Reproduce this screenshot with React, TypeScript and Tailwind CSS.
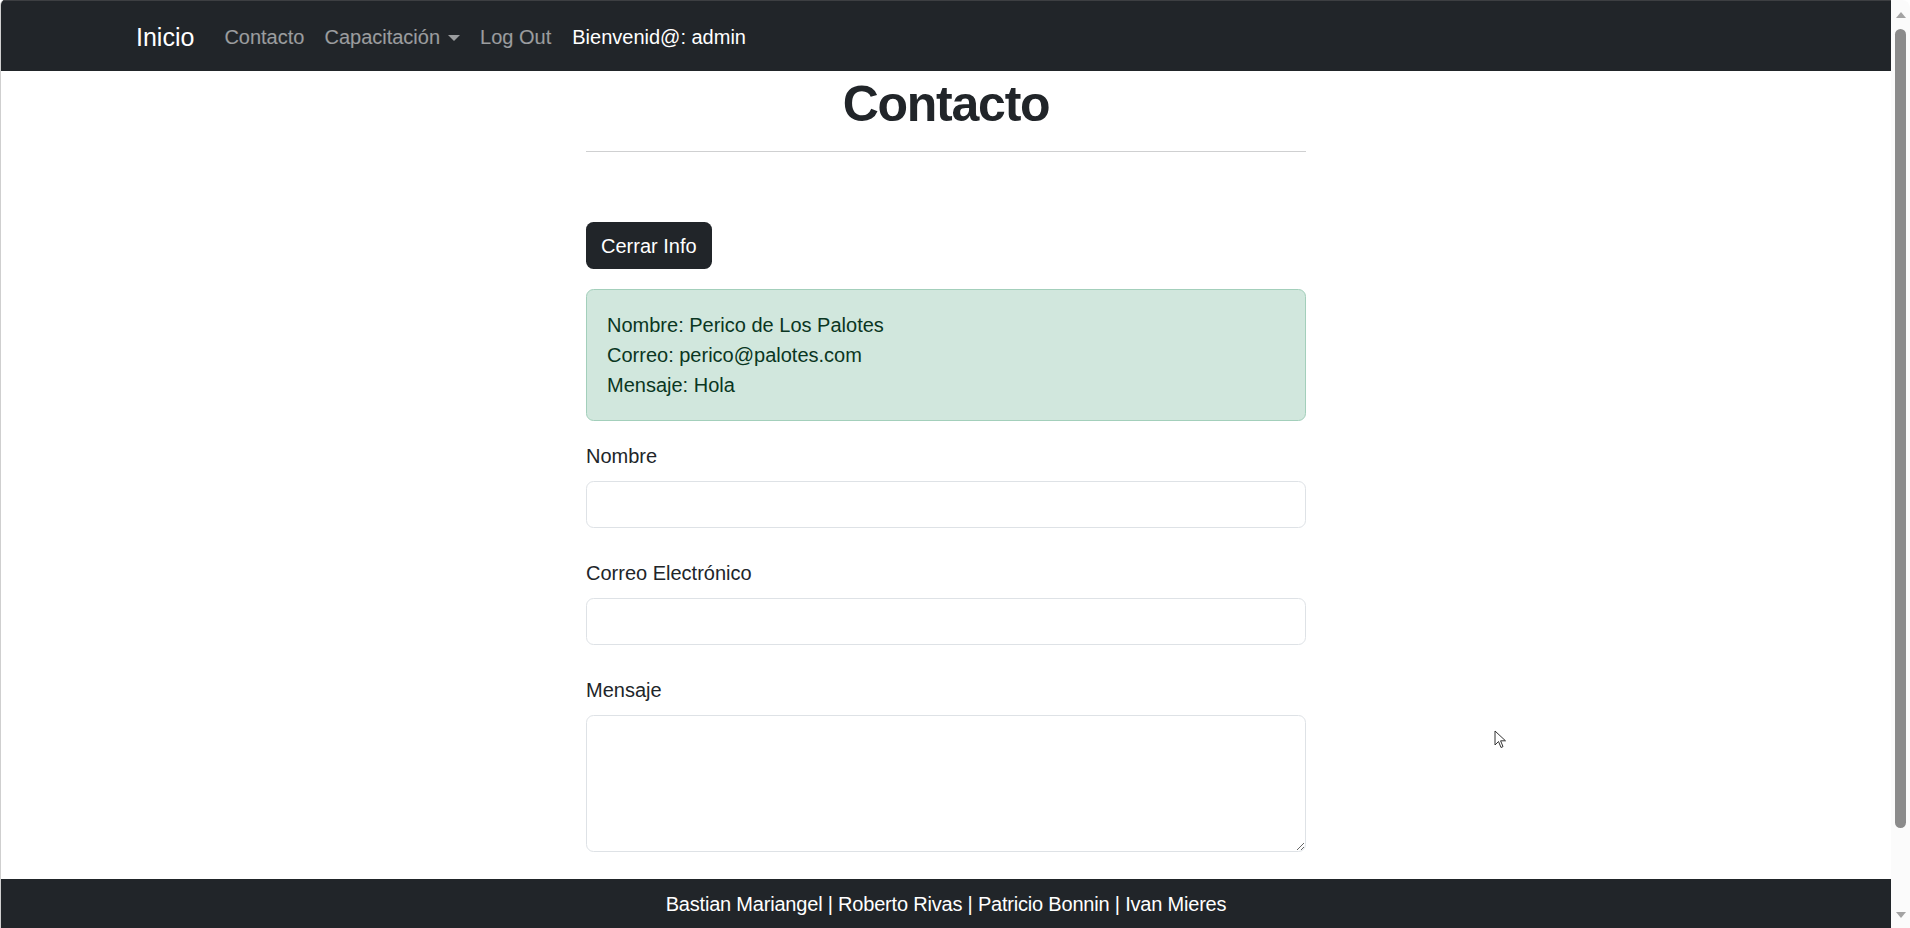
import { useState } from "react";

const font = { fontFamily: '"Liberation Sans", Arial, sans-serif' };

function Navbar() {
    return (
        <nav className="h-[71px] shrink-0 bg-[#212529] border-t border-[#3d3f42] flex items-center">
            <div className="w-[1650px] mx-auto px-[15px] pt-[2px] flex items-center">
                <a href="#" className="text-[25px] leading-[37px] text-white mr-[20px]">
                    Inicio
                </a>
                <a href="#" className="text-[20px] leading-[30px] px-[10px] text-white/55">
                    Contacto
                </a>
                <a href="#" className="text-[20px] leading-[30px] px-[10px] text-white/55 flex items-center">
                    Capacitación
                    <span className="inline-block w-0 h-0 ml-[8px] mt-[2px] border-t-[6px] border-t-white/55 border-x-[6px] border-x-transparent"></span>
                </a>
                <a href="#" className="text-[20px] leading-[30px] px-[10px] text-white/55">
                    Log Out
                </a>
                <span className="text-[20px] leading-[30px] ml-[11px] text-white">Bienvenid@: admin</span>
            </div>
        </nav>
    );
}

function Field({ label, first }: { label: string; first?: boolean }) {
    return (
        <div className={first ? "mt-[20px]" : "mt-[30px]"}>
            <label className="block text-[20px] leading-[30px] mb-[10px] text-[#212529]">{label}</label>
            <input
                type="text"
                className="block w-full h-[47px] rounded-[7.5px] border border-[#dee2e6] bg-white px-[15px] text-[20px] outline-none"
            />
        </div>
    );
}

function Scrollbar() {
    return (
        <div className="w-[19px] shrink-0 bg-[#fbfbfb] flex flex-col items-center pt-[12px] pb-[10px]">
            <span className="w-0 h-0 border-b-[6px] border-b-[#a3a3a3] border-x-[5px] border-x-transparent"></span>
            <div className="mt-[11px] w-[11px] h-[799px] rounded-full bg-[#8b8b8b]"></div>
            <div className="flex-1"></div>
            <span className="w-0 h-0 border-t-[6px] border-t-[#a3a3a3] border-x-[5px] border-x-transparent"></span>
        </div>
    );
}

export default function App() {
    const [showInfo, setShowInfo] = useState(true);

    return (
        <div style={font} className="h-[928px] w-full flex overflow-hidden bg-white rounded-tl-[5px] rounded-tr-[8px] border-l border-[#cfcfcf] relative">
            <div className="flex-1 min-w-0 flex flex-col">
                <Navbar />

                <main className="flex-1 overflow-hidden">
                    <div className="w-[720px] mx-auto">
                        <h1 className="mt-[3px] text-center text-[50px] leading-[60px] font-bold tracking-[-0.025em] text-[#212529]">
                            Contacto
                        </h1>
                        <hr className="mt-[17px] border-0 border-t border-[#cfd0d1]" />

                        <button
                            onClick={() => setShowInfo(!showInfo)}
                            className="mt-[70px] h-[47px] px-[15px] rounded-[7.5px] bg-[#212529] text-white text-[20px] leading-[30px]"
                        >
                            {showInfo ? "Cerrar Info" : "Ver Info"}
                        </button>

                        {showInfo && (
                            <div className="mt-[20px] rounded-[7.5px] border border-[#a3cfbb] bg-[#d1e7dd] p-[20px] text-[20px] leading-[30px] text-[#0a3622]">
                                <div>Nombre: Perico de Los Palotes</div>
                                <div>Correo: perico@palotes.com</div>
                                <div>Mensaje: Hola</div>
                            </div>
                        )}

                        <Field label="Nombre" first />
                        <Field label="Correo Electrónico" />

                        <div className="mt-[30px]">
                            <label className="block text-[20px] leading-[30px] mb-[10px] text-[#212529]">Mensaje</label>
                            <textarea className="block w-full h-[137px] rounded-[7.5px] border border-[#dee2e6] bg-white px-[15px] py-[7px] text-[20px] outline-none"></textarea>
                        </div>
                    </div>
                </main>

                <footer className="h-[49px] shrink-0 bg-[#212529] flex items-center justify-center text-white text-[20px] tracking-[-0.01em]">
                    Bastian Mariangel | Roberto Rivas | Patricio Bonnin | Ivan Mieres
                </footer>
            </div>

            <Scrollbar />

            {/* mouse pointer */}
            <svg className="absolute left-[1493px] top-[730px]" width="14" height="20" viewBox="0 0 14 20">
                <path d="M1 1 L1 15 L4.5 11.5 L7 17.5 L9 16.6 L6.6 10.8 L11.5 10.8 Z" fill="white" stroke="#333" strokeWidth="1" />
            </svg>
        </div>
    );
}
